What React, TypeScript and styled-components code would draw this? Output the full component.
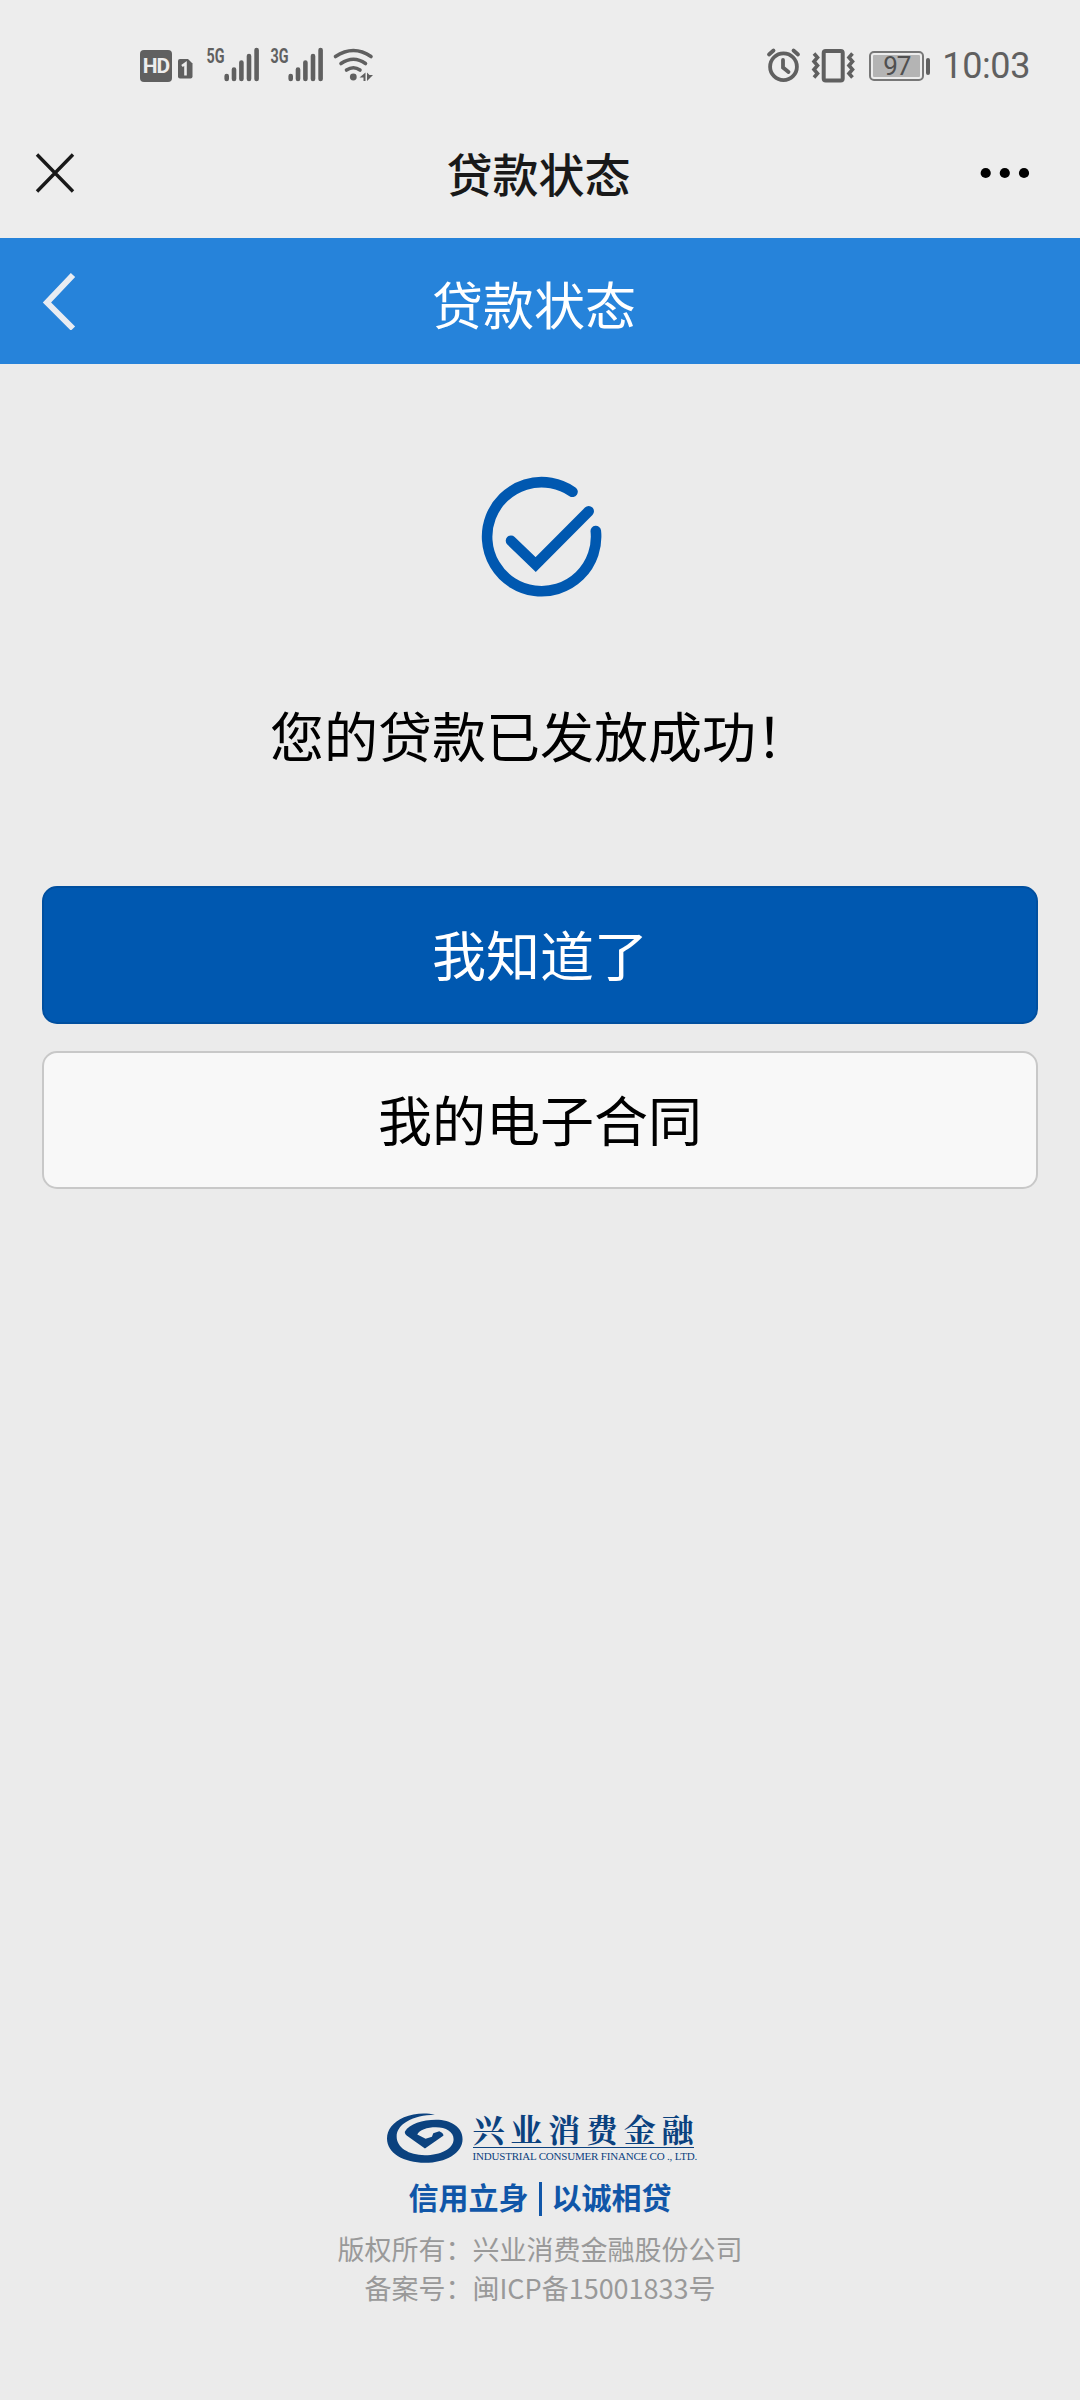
import React from 'react';
import styled, {createGlobalStyle} from 'styled-components';

const GlobalStyle = createGlobalStyle`
  * {
    box-sizing: border-box;
  }

  body {
    margin: 0;
    background: #ebebeb;
    font-family: Roboto, 'Noto Sans CJK SC', sans-serif;
  }
`;

const Page = styled.div`
  display: flex;
  flex-direction: column;
  width: 1080px;
  height: 2400px;
  background: #ebebeb;
`;

const StatusBar = styled.div`
  display: flex;
  justify-content: space-between;
  height: 130px;
  padding: 44px 50px 0 140px;
  background: #ededed;
  color: #606060;
`;

const StatusGroup = styled.div`
  display: flex;
  align-items: center;
  height: 44px;
`;

const StatusIcon = styled.svg<{gap?: number}>`
  display: block;
  flex: none;
  height: 44px;
  margin-right: ${({gap}) => gap || 0}px;
  overflow: visible;
`;

const HdBadge = styled.span`
  width: 32px;
  height: 32px;
  margin-right: 6px;
  border-radius: 4px;
  background: #606060;
  color: #ededed;
  font: bold 21px/32px Roboto, sans-serif;
  letter-spacing: -1px;
  text-align: center;
`;

const Battery = styled.div`
  display: flex;
  align-items: center;
  justify-content: center;
  width: 55px;
  height: 30px;
  padding: 2px;
  border: 2px solid #777;
  border-radius: 5px;
`;

const BatteryLevel = styled.span`
  width: 100%;
  height: 100%;
  border-radius: 1px;
  background: #b4b4b4;
  color: #505050;
  font: 26px/23px Roboto, sans-serif;
  letter-spacing: -1px;
  text-align: center;
`;

const BatteryTip = styled.span`
  width: 4px;
  height: 17px;
  margin: 0 12px 0 2px;
  border-radius: 2px;
  background: #606060;
`;

const Clock = styled.span`
  font: 36px/44px Roboto, sans-serif;
  letter-spacing: -0.4px;
`;

const TitleBar = styled.header`
  display: flex;
  align-items: center;
  justify-content: space-between;
  height: 108px;
  padding: 0 50px 22px 35px;
  background: #ededed;
`;

const Title = styled.h1`
  margin: 5px 0 0 22px;
  color: #191919;
  font-size: 46px;
  font-weight: 500;
  line-height: 60px;
`;

const NavBar = styled.nav`
  display: flex;
  align-items: center;
  justify-content: space-between;
  height: 126px;
  padding: 0 84px 0 42px;
  background: #2683da;
`;

const NavTitle = styled.h2`
  margin: 14px 0 0;
  color: #fff;
  font-size: 51px;
  font-weight: 400;
  line-height: 70px;
`;

const Spacer = styled.span`
  width: 4px;
`;

const Content = styled.main`
  display: flex;
  flex: 1;
  flex-direction: column;
  align-items: center;
  padding: 107px 42px 0;
`;

const Message = styled.p`
  margin: 97px 0 106px;
  color: #000;
  font-size: 54px;
  line-height: 80px;
`;

const Button = styled.button<{primary?: boolean}>`
  width: 100%;
  height: 138px;
  margin-bottom: 27px;
  padding: 0 0 3px;
  border: 2px solid ${({primary}) => (primary ? '#004f9f' : '#c8c8c8')};
  border-radius: 15px;
  background: ${({primary}) => (primary ? '#0058b0' : '#f8f8f8')};
  color: ${({primary}) => (primary ? '#fff' : '#000')};
  font-family: inherit;
  font-size: 54px;
`;

const Footer = styled.footer`
  display: flex;
  flex-direction: column;
  align-items: center;
  height: 287px;
`;

const Brand = styled.div`
  display: flex;
  width: 310px;
  height: 54px;
  margin-left: 4px;
`;

const BrandText = styled.div`
  margin-left: 10px;
  color: #0b427f;
`;

const BrandName = styled.div`
  width: 221px;
  height: 35px;
  border-bottom: 1px solid #0b427f;
  font-family: 'Noto Serif CJK SC', 'Noto Sans CJK SC', serif;
  font-size: 32px;
  font-weight: 700;
  letter-spacing: 5.8px;
  line-height: 31px;
  white-space: nowrap;
`;

const BrandCaption = styled.div`
  margin-top: 1px;
  font: 11px/14px 'Liberation Serif', serif;
  letter-spacing: -0.2px;
  white-space: nowrap;
`;

const Slogan = styled.div`
  display: flex;
  align-items: center;
  height: 44px;
  margin-top: 7px;
  color: #1056a8;
  font-size: 30px;
  font-weight: 700;
`;

const Divider = styled.span`
  width: 3px;
  height: 34px;
  margin: 6px 10px 0;
  background: #1056a8;
`;

const Legal = styled.p`
  margin: 11px 0 0;
  color: #999;
  font-family: 'Noto Sans CJK SC', sans-serif;
  font-size: 27px;
  font-weight: 400;
  line-height: 39px;
  text-align: center;
`;

const Signal = ({label}: {label: string}) => (
  <StatusIcon width='53' viewBox='206 44 53 44' gap={11}>
    <text
      x='206.500'
      y='62.500'
      fill='#606060'
      fontFamily='Roboto'
      fontSize='20'
      fontWeight='700'
      textLength='18'
      lengthAdjust='spacingAndGlyphs'
    >
      {label}
    </text>
    <path
      d='M226.700 76v3M234 69.500v9.500M241.400 62.500v16.500M249 56v23M256.600 50v29'
      stroke='#606060'
      strokeWidth='4.600'
      strokeLinecap='round'
    />
  </StatusIcon>
);

export default () => (
  <Page>
    <GlobalStyle />
    <StatusBar>
      <StatusGroup>
        <HdBadge>HD</HdBadge>
        <StatusIcon width='15' viewBox='178 44 15 44' gap={13}>
          <path
            d='M180 59h8l4.500 4.500v13a2 2 0 0 1-2 2h-10.500a2 2 0 0 1-2-2v-15.500a2 2 0 0 1 2-2z'
            fill='#606060'
          />
          <path d='M182 66l3.500-2.500v12' fill='none' stroke='#ededed' strokeWidth='2.600' />
        </StatusIcon>
        <Signal label='5G' />
        <Signal label='3G' />
        <StatusIcon width='40' viewBox='334 44 40 44'>
          <path
            d='M335.500 56.500q18-12 35.500 0M341 63.500q12.500-8.500 24.500 0M346.500 70q7-4.500 13.500 0'
            fill='none'
            stroke='#606060'
            strokeWidth='3.600'
            strokeLinecap='round'
          />
          <circle cx='353.300' cy='77' r='3.400' fill='#606060' />
          <path d='M359.500 77.500l6-5v8.500h-2v-3.500zM367 72.500v8.500l6-6h-3.500z' fill='#606060' />
        </StatusIcon>
      </StatusGroup>
      <StatusGroup>
        <StatusIcon width='34' viewBox='768 44 34 44' gap={10}>
          <g fill='none' stroke='#606060' strokeWidth='3.800' strokeLinecap='round'>
            <circle cx='784.500' cy='66.700' r='13.400' />
            <path d='M784 60v7.500l5.500 4.500M770 54.500l4.500-4M799 54.500l-4.500-4' />
          </g>
        </StatusIcon>
        <StatusIcon width='44' viewBox='812 44 44 44' gap={14}>
          <g fill='none' stroke='#606060' strokeWidth='3.600'>
            <rect x='824.700' y='51' width='19' height='29.500' rx='2' strokeWidth='4' />
            <path d='M815 53.500l3.500 4-3.500 4 3.500 4-3.500 4 3.500 4-3.500 4M853.500 53.500l-3.500 4 3.500 4-3.500 4 3.500 4-3.500 4 3.500 4' />
          </g>
        </StatusIcon>
        <Battery>
          <BatteryLevel>97</BatteryLevel>
        </Battery>
        <BatteryTip />
        <Clock>10:03</Clock>
      </StatusGroup>
    </StatusBar>

    <TitleBar>
      <svg width='40' height='40' viewBox='0 0 40 40'>
        <path d='M2 1.500l36 37M38 1.500l-36 37' stroke='#191919' strokeWidth='3.400' />
      </svg>
      <Title>贷款状态</Title>
      <svg width='50' height='12' viewBox='0 0 50 12'>
        <circle cx='5.700' cy='6' r='5.100' />
        <circle cx='24.800' cy='6' r='5.100' />
        <circle cx='44' cy='6' r='5.100' />
      </svg>
    </TitleBar>

    <NavBar>
      <svg width='34' height='58' viewBox='0 0 34 58'>
        <path d='M31 3L5 30.500l26 26' fill='none' stroke='#e8ecf2' strokeWidth='6' />
      </svg>
      <NavTitle>贷款状态</NavTitle>
      <Spacer />
    </NavBar>

    <Content>
      <svg width='124' height='132' viewBox='478 470 124 132'>
        <g
          fill='none'
          stroke='#0058b0'
          strokeWidth='10.600'
          strokeLinecap='round'
        >
          <path d='M572.500 490.800A54.500 54.500 0 1 0 595.800 530' />
          <path d='M511 539.700L535.700 563.500L588.700 510.300' />
        </g>
      </svg>
      <Message>您的贷款已发放成功！</Message>
      <Button primary>我知道了</Button>
      <Button>我的电子合同</Button>
    </Content>

    <Footer>
      <Brand>
        <svg width='76' height='50' viewBox='21 24 227 149'>
          <path
            d='M165 29C138 21 100 24 72 36C38 51 21 74 21 100C21 144 72 173 135 173C198 173 248 143 248 102C248 66 213 44 168 44C128 44 88 57 75 79Q73 86 80 91L135 130L190 92Q192 88 186 83L178 78L160 84L156 95L137 101L112 88C117 74 142 66 168 66C198 66 221 80 221 102C221 131 182 150 135 150C86 150 50 127 50 94C50 58 98 30 165 29Z'
            fill='#0b427f'
          />
        </svg>
        <BrandText>
          <BrandName>兴业消费金融</BrandName>
          <BrandCaption>INDUSTRIAL CONSUMER FINANCE CO ., LTD.</BrandCaption>
        </BrandText>
      </Brand>
      <Slogan>
        <span>信用立身</span>
        <Divider />
        <span>以诚相贷</span>
      </Slogan>
      <Legal>
        版权所有：兴业消费金融股份公司
        <br />
        备案号：闽ICP备15001833号
      </Legal>
    </Footer>
  </Page>
);
